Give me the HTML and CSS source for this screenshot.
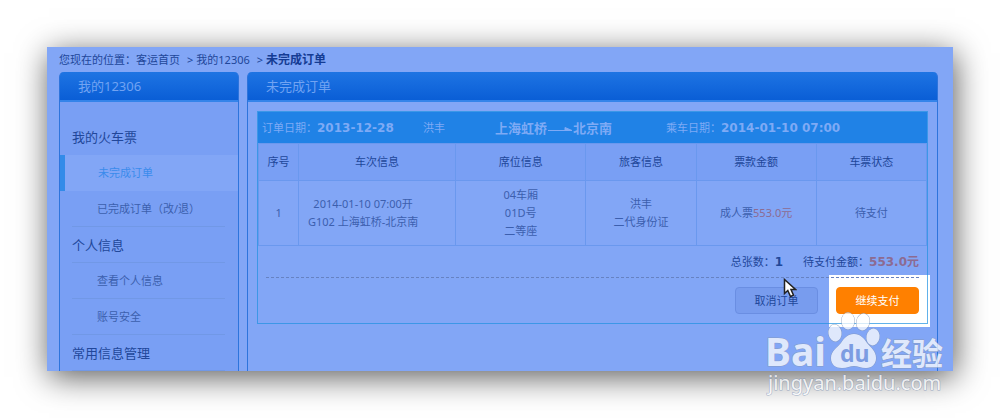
FILE: index.html
```
<!DOCTYPE html>
<html lang="zh-CN">
<head>
<meta charset="utf-8">
<title>未完成订单</title>
<link rel="stylesheet" href="styles.css">
</head>
<body>
<div class="frame">
  <nav class="crumbs">
    <span>您现在的位置：</span><a href="#">客运首页</a>
    <span class="sep">&gt;</span><a href="#">我的12306</a>
    <span class="sep">&gt;</span><strong>未完成订单</strong>
  </nav>
  <div class="columns">
    <aside class="panel side">
      <h2 class="panel-title">我的12306</h2>
      <div class="menu">
        <h3>我的火车票</h3>
        <a class="active" href="#">未完成订单</a>
        <a href="#">已完成订单（改/退）</a>
        <h3>个人信息</h3>
        <a href="#">查看个人信息</a>
        <a href="#">账号安全</a>
        <h3>常用信息管理</h3>
      </div>
    </aside>
    <main class="panel main">
      <h2 class="panel-title">未完成订单</h2>
      <section class="order">
        <header class="order-head">
          <span class="pair">订单日期：<b>2013-12-28</b></span>
          <span>洪丰</span>
          <strong class="route">上海虹桥<svg class="arrow" viewBox="0 0 26 14" aria-hidden="true"><path d="M1 8.500H25L18 5.500V8.500" /></svg>北京南</strong>
          <span class="pair">乘车日期：<b>2014-01-10 07:00</b></span>
        </header>
        <table class="tickets">
          <colgroup><col class="c1"><col class="c2"><col class="c3"><col class="c4"><col class="c5"><col></colgroup>
          <thead>
            <tr><th>序号</th><th>车次信息</th><th>席位信息</th><th>旅客信息</th><th>票款金额</th><th>车票状态</th></tr>
          </thead>
          <tbody>
            <tr>
              <td>1</td>
              <td class="train">2014-01-10 07:00开<br>G102 上海虹桥-北京南</td>
              <td>04车厢<br>01D号<br>二等座</td>
              <td>洪丰<br>二代身份证</td>
              <td>成人票<span class="price">553.0元</span></td>
              <td>待支付</td>
            </tr>
          </tbody>
        </table>
        <div class="totals">
          <span class="pair">总张数：<b>1</b></span>
          <span class="pair">待支付金额：<b class="price">553.0元</b></span>
        </div>
        <div class="actions">
          <div class="cancel-wrap">
            <button class="btn cancel" type="button">取消订单</button>
            <svg class="cursor" viewBox="0 0 14 20" aria-hidden="true"><path d="M1.500 1.500V15.500L4.800 12.500L7.500 18.500L10.500 17.200L8 11.500H12.500Z" /></svg>
          </div>
          <div class="spotlight"><button class="btn pay" type="button">继续支付</button></div>
        </div>
      </section>
    </main>
  </div>
  <svg class="mark" viewBox="0 0 186 90" role="img" aria-label="Baidu 经验">
    <g class="mark-shapes">
      <text class="mark-bai" x="3" y="57">Bai</text>
      <path d="M92 25C86 25 82 29 79 34C75 39 69 42 69 49C69 56 74 59 80 59C85 59 88 57 92 57C96 57 99 59 104 59C110 59 114 55 114 49C114 42 109 39 105 34C102 29 98 25 92 25Z" />
      <ellipse cx="73" cy="24" rx="6.500" ry="8.500" transform="rotate(-8 73 24)" />
      <ellipse cx="86" cy="12" rx="6.500" ry="8.500" />
      <ellipse cx="101" cy="13" rx="6.500" ry="8.500" transform="rotate(12 101 13)" />
      <ellipse cx="111" cy="28" rx="6.500" ry="8.500" transform="rotate(10 111 28)" />
      <text class="mark-cn" x="119" y="56">经验</text>
      <text class="mark-url" x="6" y="81">jingyan.baidu.com</text>
    </g>
    <text class="mark-du" x="78" y="53">du</text>
  </svg>
</div>
</body>
</html>
```
FILE: styles.css
```
* { box-sizing: border-box; }

body {
  margin: 0;
  padding: 47px;
  background: #fff;
  font: 11px/18px "Noto Sans", "Noto Sans CJK SC", sans-serif;
  color: #3c5fae;
}

a { color: inherit; text-decoration: none; }
h2, h3 { margin: 0; font-weight: 400; font-size: 13px; }

.frame {
  position: relative;
  background: #82a6f6;
  box-shadow: 2px 6px 30px rgba(0, 0, 0, .65);
}

.crumbs {
  display: flex;
  align-items: center;
  height: 25px;
  padding-left: 12px;
  color: #21479a;
}
.crumbs strong { font-size: 12px; color: #153c94; }
.sep { margin: 0 3px 0 7px; }

.columns {
  display: flex;
  gap: 8px;
  padding: 0 15px 0 12px;
}

.panel {
  border: 1px solid #2d74dc;
  border-width: 0 1px;
  border-radius: 5px 5px 0 0;
}
.side { flex: 0 0 180px; background: #799ff4; }
.main { flex: 1; min-width: 0; isolation: isolate; }

.panel-title {
  height: 30px;
  padding-left: 18px;
  border-bottom: 2px solid #3484ea;
  border-radius: 4px 4px 0 0;
  background: linear-gradient(#1e74e3, #0a5ed6);
  line-height: 29px;
  color: #71a3f2;
}

.menu { padding-top: 17px; }
.menu h3, .menu a {
  display: block;
  height: 36px;
  margin: 0 13px 0 12px;
  border-bottom: 1px solid #7198e6;
  line-height: 36px;
}
.menu h3 { color: #21479a; }
.menu a { padding-left: 25px; }
.menu h3:first-child { border-bottom: 0; }
.menu a.active {
  margin: 0;
  padding-left: 33px;
  border-bottom: 0;
  border-left: 5px solid #328be9;
  background: #82a6f6;
  color: #3a8bec;
}

.order {
  margin: 9px 9px 0;
  border: 1px solid rgba(30, 145, 225, .7);
}

.order-head {
  display: grid;
  grid-template-columns: 161px 72px 171px 1fr;
  align-items: center;
  height: 31px;
  padding-left: 4px;
  background: #2082e6;
  color: #7eaaf5;
}
.pair { white-space: nowrap; }
b { font-family: "DejaVu Sans", "Noto Sans CJK SC", sans-serif; font-size: 12px; }
.route { font-size: 13px; white-space: nowrap; }
.arrow { width: 26px; height: 14px; vertical-align: -3px; fill: #7eaaf5; stroke: #7eaaf5; }

.tickets {
  width: 100%;
  border-collapse: collapse;
  table-layout: fixed;
  text-align: center;
}
.tickets th, .tickets td { padding: 0; border: 1px solid #6a98ee; }
.tickets th {
  height: 37px;
  background: #799ff4;
  font-weight: 400;
  color: #21479a;
}
.tickets td { height: 65px; }
.tickets .train { padding-right: 28px; }
.c1 { width: 6%; }
.c2 { width: 23.5%; }
.c3 { width: 19.5%; }
.c4 { width: 16.5%; }
.c5 { width: 18%; }
.price { color: #8c6b92; }

.totals {
  display: flex;
  justify-content: flex-end;
  gap: 20px;
  height: 32px;
  margin: 0 8px;
  border-bottom: 1px dashed #6682c2;
  line-height: 32px;
  color: #21479a;
}

.actions {
  display: flex;
  justify-content: flex-end;
  gap: 18px;
  padding: 9px 8px;
}
.btn {
  display: block;
  width: 83px;
  height: 27px;
  padding: 0;
  border: 1px solid #6a8ee2;
  border-radius: 4px;
  font: inherit;
}
.cancel { background: #789cee; color: #21479a; }
.pay { border-color: #ff8000; background: #ff8000; color: #fff; }

.cancel-wrap, .spotlight { position: relative; }
.spotlight::before {
  content: "";
  position: absolute;
  z-index: -1;
  inset: -12px -11px -13px -7px;
  background: #fff;
}
.cursor {
  position: absolute;
  top: -9px;
  right: 21px;
  width: 14px;
  height: 20px;
  fill: #fff;
  stroke: #222;
  stroke-width: 1.5;
}

.mark {
  position: absolute;
  right: 5px;
  bottom: -28px;
  width: 186px;
  height: 90px;
}
.mark-shapes { fill: #fff; stroke: #8296b8; stroke-width: 1; paint-order: stroke; opacity: .75; }
.mark-bai { font: 700 39px "Noto Sans", sans-serif; }
.mark-cn { font: 700 31px "Noto Sans CJK SC", sans-serif; }
.mark-url { font: 400 20px "Noto Sans", sans-serif; }
.mark-du { font: 700 23px "Noto Sans", sans-serif; fill: #7c9ce2; }
```
